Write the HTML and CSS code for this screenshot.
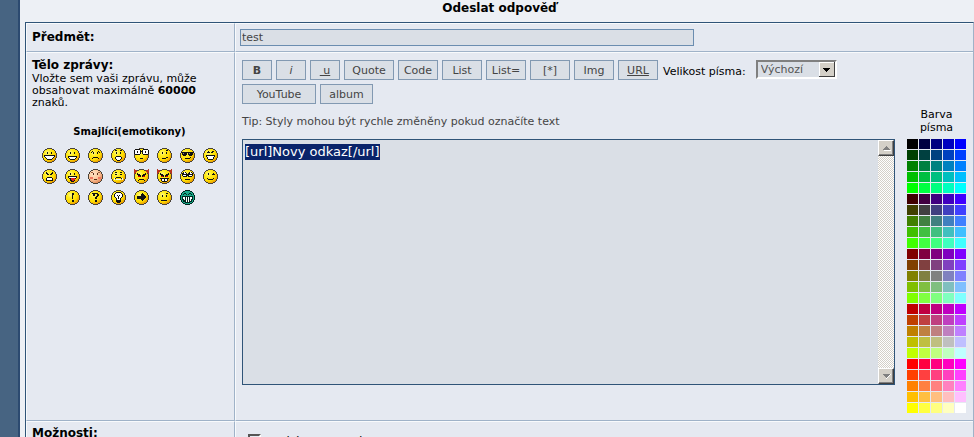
FILE: index.html
```
<!DOCTYPE html>
<html lang="cs">
<head>
  <meta charset="UTF-8">
  <meta name="viewport" content="width=device-width, initial-scale=1.0">
  <title>Odeslat odpověď</title>
  <link rel="stylesheet" href="styles.css">
  <script src="script.js" defer></script>
</head>
<body>
  <svg class="defs" aria-hidden="true">
    <defs>
      <radialGradient id="yellow" cx="0.35" cy="0.3" r="0.75">
        <stop offset="0" stop-color="#fff890"/>
        <stop offset="0.3" stop-color="#ffee20"/>
        <stop offset="0.7" stop-color="#ffdc00"/>
        <stop offset="1" stop-color="#e89a00"/>
      </radialGradient>
      <radialGradient id="pink" cx="0.35" cy="0.3" r="0.75">
        <stop offset="0" stop-color="#ffe6c8"/>
        <stop offset="0.6" stop-color="#fcc498"/>
        <stop offset="1" stop-color="#e08858"/>
      </radialGradient>
    </defs>
  </svg>
  <main class="page">
    <h1>Odeslat odpověď</h1>
    <form class="post">
      <div class="cell"><label class="heading" for="subject">Předmět:</label></div>
      <div class="cell field"><input type="text" id="subject" class="subject" value="test"></div>

      <div class="cell side">
        <label class="heading" for="message">Tělo zprávy:</label>
        <p class="hint">Vložte sem vaši zprávu, může obsahovat maximálně <b>60000</b> znaků.</p>
        <h2>Smajlíci(emotikony)</h2>
        <div class="smilies" id="smilies"></div>
      </div>
      <div class="cell editor">
        <div class="write">
          <div class="tools">
            <button type="button" class="tool small"><b>B</b></button>
            <button type="button" class="tool small"><i>i</i></button>
            <button type="button" class="tool small under">&nbsp;u</button>
            <button type="button" class="tool quote">Quote</button>
            <button type="button" class="tool">Code</button>
            <button type="button" class="tool">List</button>
            <button type="button" class="tool">List=</button>
            <button type="button" class="tool">[*]</button>
            <button type="button" class="tool">Img</button>
            <button type="button" class="tool under">URL</button>
            <label class="size-label" for="size">Velikost písma:</label>
            <span class="select-box">
              <select id="size"><option>Výchozí</option></select>
              <svg class="select-arrow" width="16" height="15" viewBox="0 0 16 15" aria-hidden="true" shape-rendering="crispEdges">
                <path d="M0 0h16v15h-16z" fill="#404040"/>
                <path d="M0 0h15v14h-15z" fill="#fff"/>
                <path d="M1 1h14v13h-14z" fill="#d4d0c8"/>
                <path d="M4 6h7v1h-1v1h-1v1h-1v1h-1v-1h-1v-1h-1v-1h-1z" fill="#000"/>
              </svg>
            </span>
          </div>
          <div class="tools">
            <button type="button" class="tool youtube">YouTube</button>
            <button type="button" class="tool album">album</button>
          </div>
          <p class="tip">Tip: Styly mohou být rychle změněny pokud označíte text</p>
          <div class="message">
            <textarea id="message">[url]Novy odkaz[/url]</textarea>
            <div class="scrollbar">
              <button type="button" class="scroll" aria-label="Nahoru">
                <svg width="9" height="6" viewBox="0 0 9 6" shape-rendering="crispEdges"><path d="M2 5h7v1h-7z" fill="#fff"/><path d="M1 5v-1h1v-1h1v-1h1v-1h1v1h1v1h1v1h1v1z" fill="#808080"/></svg>
              </button>
              <button type="button" class="scroll" aria-label="Dolů">
                <svg width="9" height="6" viewBox="0 0 9 6" shape-rendering="crispEdges"><path d="M8 1h1v1h-1v1h-1v1h-1v1h-1v1h-1v-1z" fill="#fff"/><path d="M1 1h7v1h-1v1h-1v1h-1v1h-1v-1h-1v-1h-1v-1h-1z" fill="#808080"/></svg>
              </button>
            </div>
          </div>
        </div>
        <div class="colors">
          <p>Barva písma</p>
          <div class="palette" id="palette"></div>
        </div>
      </div>

      <div class="cell last"><span class="heading">Možnosti:</span></div>
      <div class="cell last options">
        <input type="checkbox" id="bbcode">
        <label for="bbcode">Zakázat BBCode</label>
      </div>
    </form>
  </main>
</body>
</html>
```
FILE: styles.css
```
body {
  margin: 0;
  height: 100vh;
  overflow: hidden;
  background-color: #476482;
  font-family: Verdana, "DejaVu Sans", sans-serif;
  font-size: 11px;
  color: #000;
}
.defs {
  position: absolute;
  width: 0;
  height: 0;
}
.page {
  margin-left: 18px;
  min-height: 100vh;
  padding-left: 5px;
  border-left: 2px solid #2c4a70;
  background-color: #edf0f5;
}
h1 {
  margin: 0;
  height: 22px;
  line-height: 17px;
  font-size: 12px;
  text-align: center;
}
.post {
  display: grid;
  grid-template-columns: 209px 1fr;
  border: 1px solid #2f5478;
  border-right-color: #9fb2c8;
}
.cell {
  padding: 4px 5px;
  border-top: 1px solid #f8fafc;
  border-left: 1px solid #f8fafc;
  border-bottom: 1px solid #9fb2c8;
  background-color: #e5e9f1;
}
.cell:nth-child(odd) {
  border-right: 1px solid #9fb2c8;
}
.heading {
  display: block;
  font-size: 12px;
  line-height: 19px;
  font-weight: bold;
}
.field {
  padding: 5px 4px;
}
.subject {
  box-sizing: border-box;
  display: block;
  width: 454px;
  max-width: 100%;
  height: 17px;
  padding: 0 1px;
  border: 1px solid #6b8db0;
  border-radius: 0;
  background-color: #dadfe6;
  font: inherit;
  color: #444;
}
.side {
  padding-right: 7px;
}
.side .heading {
  line-height: 16px;
}
.hint {
  margin: 0;
  line-height: 12px;
}
h2 {
  margin: 17px 0 10px;
  font-size: 10px;
  line-height: 12px;
  text-align: center;
}
.smilies {
  display: flex;
  flex-wrap: wrap;
  justify-content: center;
  gap: 6px 8px;
}
.smilies a,
.smilies svg {
  display: block;
  width: 15px;
  height: 15px;
}
.editor {
  display: flex;
  gap: 12px;
  padding: 7px 6px;
}
.write {
  flex: 1;
}
.tools {
  display: flex;
  gap: 4px;
  margin-bottom: 4px;
}
.tool {
  box-sizing: border-box;
  width: 40px;
  height: 20px;
  padding: 0;
  border: 1px solid #8299b2;
  background-color: #dadfe6;
  font: inherit;
  color: #444;
}
.small {
  width: 30px;
}
.quote {
  width: 50px;
}
.youtube {
  width: 74px;
}
.album {
  width: 53px;
}
.under {
  text-decoration: underline;
}
.size-label {
  padding: 0 6px 0 1px;
  line-height: 24px;
  height: 20px;
}
.select-box {
  display: grid;
  width: 81px;
  height: 19px;
}
.select-box > * {
  grid-area: 1 / 1;
}
select {
  appearance: none;
  padding: 0 3px;
  border: 2px solid;
  border-color: #808080 #fff #fff #808080;
  border-radius: 0;
  background-color: #dadfe6;
  font: inherit;
  color: #555;
}
.select-arrow {
  justify-self: end;
  margin: 2px;
}
.tip {
  margin: 12px 0 11px;
  line-height: 12px;
  color: #444;
}
.message {
  display: flex;
  height: 244px;
  border: 1px solid #2f5478;
  background-color: #dadfe6;
}
textarea {
  flex: 1;
  padding: 4px 2px;
  border: 0;
  outline: 0;
  resize: none;
  overflow: hidden;
  background-color: transparent;
  font: 13px/16px Verdana, "DejaVu Sans", sans-serif;
}
textarea::selection {
  background-color: #0a246a;
  color: #fff;
}
.scrollbar {
  display: flex;
  flex-direction: column;
  justify-content: space-between;
  width: 16px;
  background: repeating-conic-gradient(#fff 0 25%, #d4d0c8 0 50%) 0 0 / 2px 2px;
}
.scroll {
  display: flex;
  align-items: center;
  justify-content: center;
  width: 16px;
  height: 16px;
  padding: 0;
  border: 1px solid;
  border-color: #fff #404040 #404040 #fff;
  background-color: #d4d0c8;
  box-shadow: inset -1px -1px #808080;
}
.colors {
  margin: 48px 1px 0 0;
  text-align: center;
}
.colors p {
  width: 40px;
  margin: 0 auto 5px;
  line-height: 13px;
}
.palette {
  display: grid;
  grid-template-columns: repeat(5, 11px);
  grid-auto-rows: 10px;
  gap: 1px;
}
.color {
  padding: 0;
  border: 0;
}
.last {
  padding-top: 2px;
  padding-bottom: 0;
  border-bottom: 0;
}
.options {
  display: flex;
  gap: 10px;
  padding: 12px 12px 0;
  font-size: 12px;
  line-height: 16px;
}
.options input {
  appearance: none;
  width: 13px;
  height: 13px;
  margin: 0;
  border: 2px solid;
  border-color: #555 #fff #fff #555;
}
```
FILE: script.js
```
const BLACK = '#111';

// face drawings on a 15x15 grid, one [path, color] pair per layer
const eyes = ['M5 4h1v2h-1zM9 4h1v2h-1z', BLACK];
const horns = ['M0 0h1v1h2v2h-1v1h-1v1h-1zM14 0h1v5h-1v-1h-1v-1h-1v-2h2z', '#b83420'];
const glare = ['M3 4h1v1h2v1h1v2h-1v-1h-2v-1h-1zM11 4h1v2h-1v1h-2v1h-1v-2h1v-1h2z', BLACK];
const redEyes = ['M4 6h2v2h-2zM9 6h2v2h-2z', '#e00000'];
const smilies = [
  ['Very Happy', [eyes, ['M2 7h11v2h-1v1h-1v1h-1v1h-5v-1h-1v-1h-1v-1h-1z', BLACK], ['M3 8h9v1h-1v1h-1v1h-5v-1h-1v-1h-1z', '#fff']]],
  ['Smile', [eyes, ['M3 8h9v2h-1v1h-1v1h-5v-1h-1v-1h-1z', BLACK], ['M4 9h7v1h-1v1h-5v-1h-1z', '#fff']]],
  ['Sad', [['M5 4h1v2h-1zM9 4h1v2h-1zM3 4h1v1h-1zM4 3h1v1h-1zM10 3h1v1h-1zM11 4h1v1h-1zM5 9h5v1h-5zM4 10h1v1h-1zM10 10h1v1h-1z', BLACK]]],
  ['Surprised', [['M5 4h1v2h-1zM9 4h1v2h-1zM4 2h2v1h-2zM9 2h2v1h-2zM5 8h5v1h1v2h-1v1h-1v1h-3v-1h-1v-1h-1v-2h1z', BLACK], ['M5 9h5v2h-1v1h-3v-1h-1z', '#fff']]],
  ['Shocked', [['M1 1h5v1h1v1h1v-1h1v-1h5v1h1v4h-1v1h-5v-1h-1v-2h-1v2h-1v1h-5v-1h-1v-4h1zM6 10h3v1h-3z', BLACK], ['M1 2h5v4h-5zM9 2h5v4h-5z', '#fff'], ['M3 3h1v2h-1zM11 3h1v2h-1z', BLACK]]],
  ['Confused', [['M5 4h1v2h-1zM9 4h1v2h-1zM9 2h2v1h-2zM5 10h4v1h-4zM9 9h2v1h-2z', BLACK]]],
  ['Cool', [['M1 4h13v1h-1v2h-1v1h-3v-1h-1v-2h-1v2h-1v1h-3v-1h-1v-2h-1zM5 10h5v1h-5zM10 9h1v1h-1z', BLACK], ['M3 5h1v1h-1zM9 5h1v1h-1z', '#888']]],
  ['Laughing', [['M4 3h2v1h1v1h-3v-1h1zM9 3h2v1h-1v1h-2v-1h1zM3 7h9v2h-1v2h-1v1h-5v-1h-1v-2h-1z', BLACK], ['M4 8h7v1h-1v2h-5v-2h-1z', '#fff']]],
  ['Mad', [['M4 3h1v1h1v1h1v1h-2v-1h-1zM10 3h1v2h-1v1h-2v-1h1v-1h1zM5 8h5v1h1v3h-7v-3h1z', BLACK], ['M5 9h5v2h-5z', '#fff']]],
  ['Razz', [eyes, ['M3 7h9v2h-1v1h-1v2h-1v1h-3v-1h-1v-2h-1v-1h-1z', BLACK], ['M4 8h7v1h-7z', '#fff'], ['M6 9h4v2h-1v1h-2v-1h-1z', '#e02020']]],
  ['Embarassed', [['M5 4h1v2h-1zM9 4h1v2h-1zM6 10h3v1h-3z', '#5a2c18'], ['M3 3h2v1h-2zM10 3h2v1h-2z', '#a06040'], ['M2 8h3v2h-3zM10 8h3v2h-3z', '#f07860']], 'pink'],
  ['Crying', [['M4 5h2v1h-2zM9 5h2v1h-2zM4 3h2v1h-2zM9 3h2v1h-2zM5 8h5v1h-5zM4 9h1v1h-1zM10 9h1v1h-1z', BLACK], ['M3 9h1v2h-1zM11 9h1v2h-1zM5 10h5v1h-5z', '#e8f4ff']]],
  ['Evil', [horns, redEyes, glare, ['M5 10h5v1h-5zM4 11h1v1h-1zM10 11h1v1h-1z', BLACK]]],
  ['Twisted', [horns, redEyes, glare, ['M3 9h9v1h-1v2h-1v1h-5v-1h-1v-2h-1z', BLACK], ['M5 10h2v2h-2zM8 10h2v2h-2z', '#fff']]],
  ['Rolling Eyes', [['M3 3h3v1h1v1h1v-1h1v-1h3v1h1v3h-1v1h-4v-1h-1v1h-4v-1h-1v-3h1zM5 10h5v1h-5z', BLACK], ['M4 3h1v1h1v1h-2zM10 3h1v1h1v1h-2zM3 6h3v1h-3zM9 6h3v1h-3z', '#fff']]],
  ['Wink', [['M5 4h1v2h-1zM9 5h3v1h-3zM10 4h1v1h-1zM4 9h1v1h5v-1h1v1h-1v1h-5v-1h-1z', BLACK]]],
  ['Exclamation', [['M7 3h2v2h-1v4h-1zM7 10h2v2h-2z', BLACK]]],
  ['Question', [['M5 3h5v1h1v2h-1v1h-1v2h-2v-2h1v-1h1v-2h-2v2h-2v-2h-1v-1h1zM7 10h2v2h-2z', BLACK]]],
  ['Idea', [['M5 2h5v1h1v1h1v3h-1v1h-1v4h-1v1h-3v-1h-1v-4h-1v-1h-1v-3h1v-1h1z', BLACK], ['M5 3h5v1h1v3h-1v1h-1v2h-3v-2h-1v-1h-1v-3h1z', '#fff'], ['M6 5h1v1h1v-1h1v1h-1v3h-1v-3h-1z', BLACK]]],
  ['Arrow', [['M3 6h4v-2h1v-1h1v1h1v1h1v1h1v2h-1v1h-1v1h-1v1h-1v-1h-1v-1h-4z', BLACK]]],
  ['Neutral', [['M5 5h1v2h-1zM9 5h1v2h-1zM9 3h2v1h-2zM4 10h6v1h-6z', BLACK]]],
  ['Mr. Green', [['M3 4h1v-1h2v1h1v1h-1v-1h-2v1h-1zM8 4h1v-1h2v1h1v1h-1v-1h-2v1h-1zM2 6h11v4h-1v2h-2v1h-5v-1h-2v-2h-1z', '#002820'], ['M3 7h2v3h-1v-1h-1zM6 7h1v5h-1zM8 7h1v5h-1zM10 7h2v2h-1v2h-1z', '#fff']], 'green']
];

const fills = {
  yellow: 'url(#yellow)',
  pink: 'url(#pink)',
  green: '#18a888'
};

function drawSmiley([name, layers, fill = 'yellow']) {
  const face = layers.map(([d, color]) => `<path d="${d}" fill="${color}"/>`).join('');
  const edge = fill === 'green' ? '#002820' : '#4a4238';
  return `<a href="#" title="${name}" aria-label="${name}">
    <svg viewBox="0 0 15 15" shape-rendering="crispEdges">
      <path d="M5 0h5v1h2v1h1v1h1v2h1v5h-1v2h-1v1h-1v1h-2v1h-5v-1h-2v-1h-1v-1h-1v-2h-1v-5h1v-2h1v-1h1v-1h2z" fill="${edge}"/>
      <path d="M5 1h5v1h2v1h1v2h1v5h-1v2h-1v1h-2v1h-5v-1h-2v-1h-1v-2h-1v-5h1v-2h1v-1h2z" fill="${fills[fill]}"/>
      ${face}
    </svg></a>`;
}

document.getElementById('smilies').innerHTML = smilies.map(drawSmiley).join('');

// red changes every five rows, green on each row, blue on each column
const levels = ['00', '40', '80', 'BF', 'FF'];
let swatches = '';
for (const r of levels) {
  for (const g of levels) {
    for (const b of levels) {
      const color = `#${r}${g}${b}`;
      swatches += `<button type="button" class="color" style="background-color: ${color}" aria-label="${color}"></button>`;
    }
  }
}
document.getElementById('palette').innerHTML = swatches;

const message = document.getElementById('message');
message.focus();
message.select();
```
